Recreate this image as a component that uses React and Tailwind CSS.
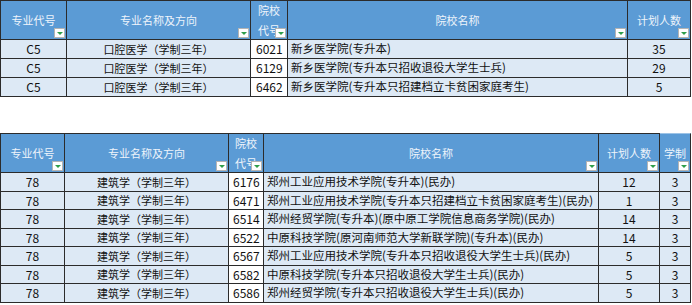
const font = { fontFamily: '"Noto Sans CJK SC", "Noto Sans", sans-serif' }

const topRows = [
  ['C5', '口腔医学（学制三年）', '6021', '新乡医学院(专升本)', '35'],
  ['C5', '口腔医学（学制三年）', '6129', '新乡医学院(专升本只招收退役大学生士兵)', '29'],
  ['C5', '口腔医学（学制三年）', '6462', '新乡医学院(专升本只招建档立卡贫困家庭考生)', '5'],
]

const bottomRows = [
  ['78', '建筑学（学制三年）', '6176', '郑州工业应用技术学院(专升本)(民办)', '12', '3'],
  ['78', '建筑学（学制三年）', '6471', '郑州工业应用技术学院(专升本只招建档立卡贫困家庭考生)(民办)', '1', '3'],
  ['78', '建筑学（学制三年）', '6514', '郑州经贸学院(专升本)(原中原工学院信息商务学院)(民办)', '14', '3'],
  ['78', '建筑学（学制三年）', '6522', '中原科技学院(原河南师范大学新联学院)(专升本)(民办)', '14', '3'],
  ['78', '建筑学（学制三年）', '6567', '郑州工业应用技术学院(专升本只招收退役大学生士兵)(民办)', '5', '3'],
  ['78', '建筑学（学制三年）', '6582', '中原科技学院(专升本只招收退役大学生士兵)(民办)', '5', '3'],
  ['78', '建筑学（学制三年）', '6586', '郑州经贸学院(专升本只招收退役大学生士兵)(民办)', '5', '3'],
]

function Filter() {
  return (
    <span className="absolute right-[1px] bottom-[1px] w-[11px] h-[10px] bg-white border border-[#b4b4b4] flex items-center justify-center">
      <span className="w-0 h-0 border-l-[3px] border-r-[3px] border-t-[3px] border-l-transparent border-r-transparent border-t-[#2e9e4a]" />
    </span>
  )
}

function Head({ children, extra = '' }) {
  return (
    <div className={`relative h-[39px] bg-[#5b9bd5] border-r border-b border-[#2b2b2b] flex items-center justify-center text-center text-[11px] leading-[20px] text-[#eef4fb] ${extra}`}>
      <span>{children}</span>
      <Filter />
    </div>
  )
}

function Cell({ children, align = 'center', white = false, h = 'h-[19px]' }) {
  const a = align === 'center' ? 'justify-center' : 'justify-start pl-[3px]'
  return (
    <div className={`${h} border-r border-b border-[#2b2b2b] flex items-center whitespace-nowrap overflow-hidden text-[#111] ${a} ${white ? 'bg-white' : 'bg-[#dde9f5]'}`}>
      {children}
    </div>
  )
}

export default function App() {
  return (
    <div className="w-[692px] h-[305px] bg-white overflow-hidden" style={font}>
      <div className="grid grid-cols-[66px_184px_37px_340px_63px] w-[691px] border-l border-t border-[#2b2b2b]">
        <Head>专业代号</Head>
        <Head>专业名称及方向</Head>
        <Head>院校<br />代号</Head>
        <Head>院校名称</Head>
        <Head>计划人数</Head>
        {topRows.map((r, i) => (
          <div key={i} className="contents">
            <Cell><span className="text-[12px]">{r[0]}</span></Cell>
            <Cell><span className="text-[11px]">{r[1]}</span></Cell>
            <Cell align="left" white><span className="text-[12px] pl-[2px]">{r[2]}</span></Cell>
            <Cell align="left"><span className="text-[11.5px]">{r[3]}</span></Cell>
            <Cell><span className="text-[12px]">{r[4]}</span></Cell>
          </div>
        ))}
      </div>

      <div className="mt-[36px] grid grid-cols-[64px_164px_35px_335px_61px_31px] w-[691px] border-l border-t border-[#2b2b2b]">
        <Head>专业代号</Head>
        <Head>专业名称及方向</Head>
        <Head>院校<br />代号</Head>
        <Head>院校名称</Head>
        <Head>计划人数</Head>
        <Head extra="border-t border-t-[#9dc3e6] -mt-[1px] h-[40px]">学制</Head>
        {bottomRows.map((r, i) => {
          const h = i % 2 === 0 ? 'h-[19px]' : 'h-[18px]'
          return (
            <div key={i} className="contents">
              <Cell h={h}><span className="text-[12px]">{r[0]}</span></Cell>
              <Cell h={h}><span className="text-[11px]">{r[1]}</span></Cell>
              <Cell h={h} align="left" white><span className="text-[12px] pl-[1px]">{r[2]}</span></Cell>
              <Cell h={h} align="left"><span className="text-[11.5px]">{r[3]}</span></Cell>
              <Cell h={h}><span className="text-[12px]">{r[4]}</span></Cell>
              <Cell h={h}><span className="text-[12px]">{r[5]}</span></Cell>
            </div>
          )
        })}
      </div>
    </div>
  )
}
